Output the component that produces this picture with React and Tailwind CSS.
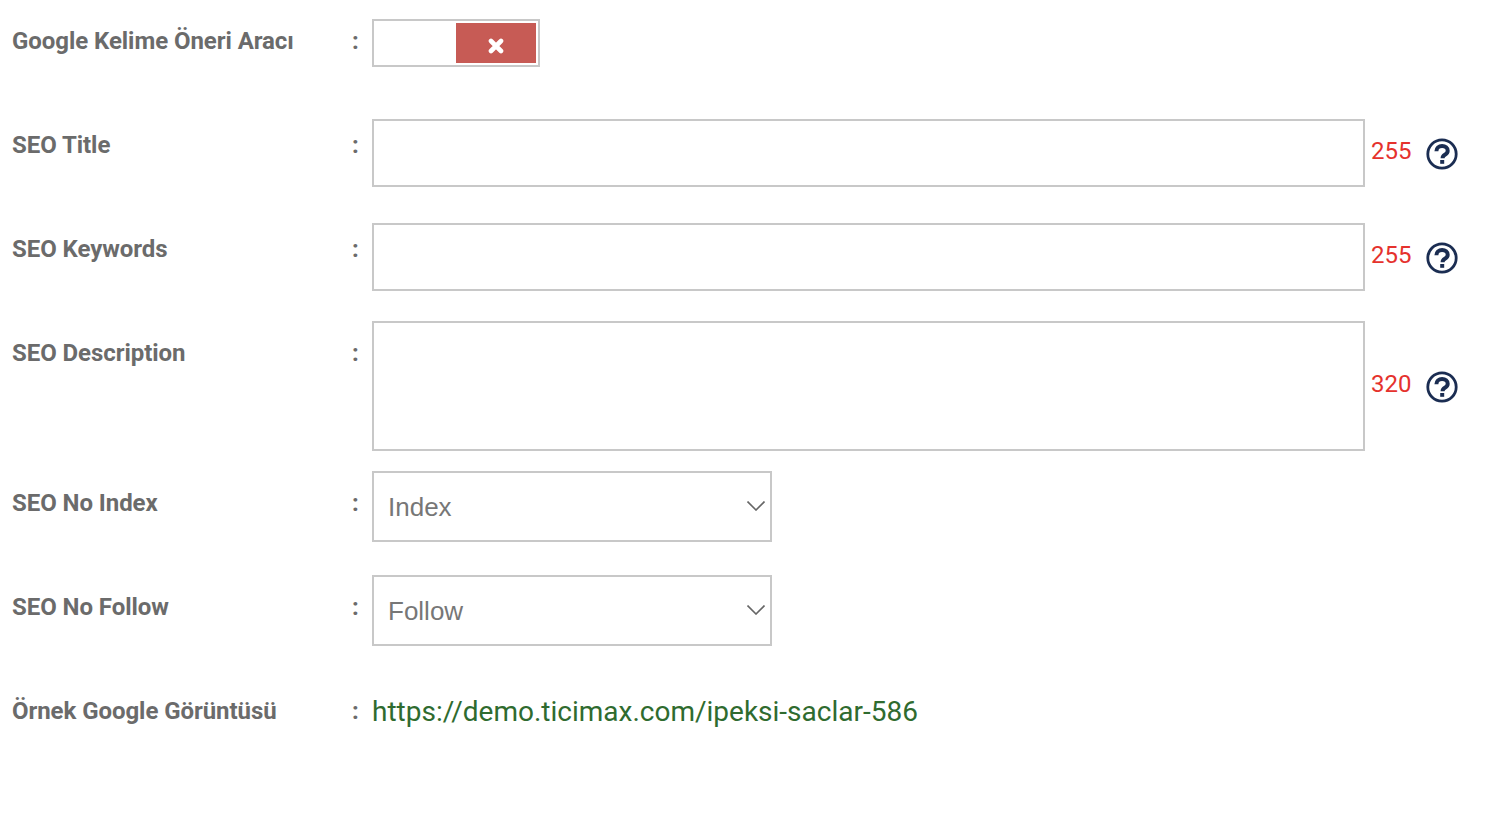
import React from 'react';

function HelpIcon() {
  return (
    <svg width="32" height="32" viewBox="0 0 32 32" fill="none" className="block shrink-0">
      <circle cx="16" cy="16" r="14.2" stroke="#1b2d52" strokeWidth="2.8" />
      <path d="M10.4 13.2c0-3.2 2.4-5.2 5.7-5.2s5.6 1.9 5.6 4.7c0 2.1-1.3 3.2-2.8 4.1-1.5.9-2.3 1.6-2.3 3.4" stroke="#1b2d52" strokeWidth="4" />
      <rect x="14.2" y="22" width="4" height="3.8" fill="#1b2d52" />
    </svg>
  );
}

function CloseIcon() {
  return (
    <svg width="16" height="16" viewBox="0 0 16 16" fill="none" className="block">
      <path d="M3 3l10 10M13 3L3 13" stroke="#ffffff" strokeWidth="4.6" strokeLinecap="round" />
    </svg>
  );
}

function Chevron() {
  return (
    <svg width="18" height="10" viewBox="0 0 18 10" fill="none" className="block">
      <path d="M0.5 0.5L9 9L17.5 0.5" stroke="#666666" strokeWidth="1.6" />
    </svg>
  );
}

function Row({ label, labelPad = 'pt-[6px]', className = '', children }) {
  return (
    <div className={`flex items-start ${className}`}>
      <div className={`w-[352px] pl-3 text-[24px] leading-[32px] font-bold text-[#6b6b6b] tracking-[-0.06px] ${labelPad}`}>{label}</div>
      <div className={`w-[20px] text-[24px] leading-[32px] font-bold text-[#6b6b6b] ${labelPad}`}>:</div>
      {children}
    </div>
  );
}

function Counter({ value }) {
  return (
    <div className="flex items-center self-stretch">
      <span className="ml-[6px] w-[40px] pb-[4px] text-[24px] text-[#e5322d]">{value}</span>
      <span className="ml-[15px] pt-[2px]"><HelpIcon /></span>
    </div>
  );
}

function SelectBox({ value }) {
  return (
    <div className="relative w-[400px] h-[71px]">
      <select
        defaultValue={value}
        className="w-full h-full appearance-none bg-white border-2 border-[#c8c8c8] pl-[14px] pt-[2px] text-[26px] text-[#777777] outline-none"
        style={{ fontFamily: '"Liberation Sans", Arial, sans-serif' }}
      >
        <option>{value}</option>
      </select>
      <span className="absolute right-[7px] top-[30px] pointer-events-none"><Chevron /></span>
    </div>
  );
}

export default function App() {
  return (
    <div className="min-h-[816px] bg-white pt-[19px]" style={{ fontFamily: 'Roboto, sans-serif' }}>
      <Row label="Google Kelime Öneri Aracı" labelPad="pt-[6px]">
        <div className="flex justify-end w-[168px] h-[48px] border-2 border-[#c8c8c8] p-[2px]">
          <div className="flex items-center justify-center w-[80px] bg-[#c75b55] pt-[5px]">
            <CloseIcon />
          </div>
        </div>
      </Row>

      <Row label="SEO Title" className="mt-[52px] h-[68px]" labelPad="pt-[10px]">
        <input className="w-[993px] h-[68px] border-2 border-[#c8c8c8] bg-white outline-none" />
        <Counter value="255" />
      </Row>

      <Row label="SEO Keywords" className="mt-[36px] h-[68px]" labelPad="pt-[10px]">
        <input className="w-[993px] h-[68px] border-2 border-[#c8c8c8] bg-white outline-none" />
        <Counter value="255" />
      </Row>

      <Row label="SEO Description" className="mt-[30px] h-[130px]" labelPad="pt-[16px]">
        <textarea className="block w-[993px] h-[130px] border-2 border-[#c8c8c8] bg-white outline-none resize-none" />
        <Counter value="320" />
      </Row>

      <Row label="SEO No Index" className="mt-[20px]" labelPad="pt-[16px]">
        <SelectBox value="Index" />
      </Row>

      <Row label="SEO No Follow" className="mt-[33px]" labelPad="pt-[16px]">
        <SelectBox value="Follow" />
      </Row>

      <Row label="Örnek Google Görüntüsü" className="mt-[33px]" labelPad="pt-[16px]">
        <a className="pt-[17px] text-[28px] leading-[32px] text-[#2f6b2f]">https://demo.ticimax.com/ipeksi-saclar-586</a>
      </Row>
    </div>
  );
}
